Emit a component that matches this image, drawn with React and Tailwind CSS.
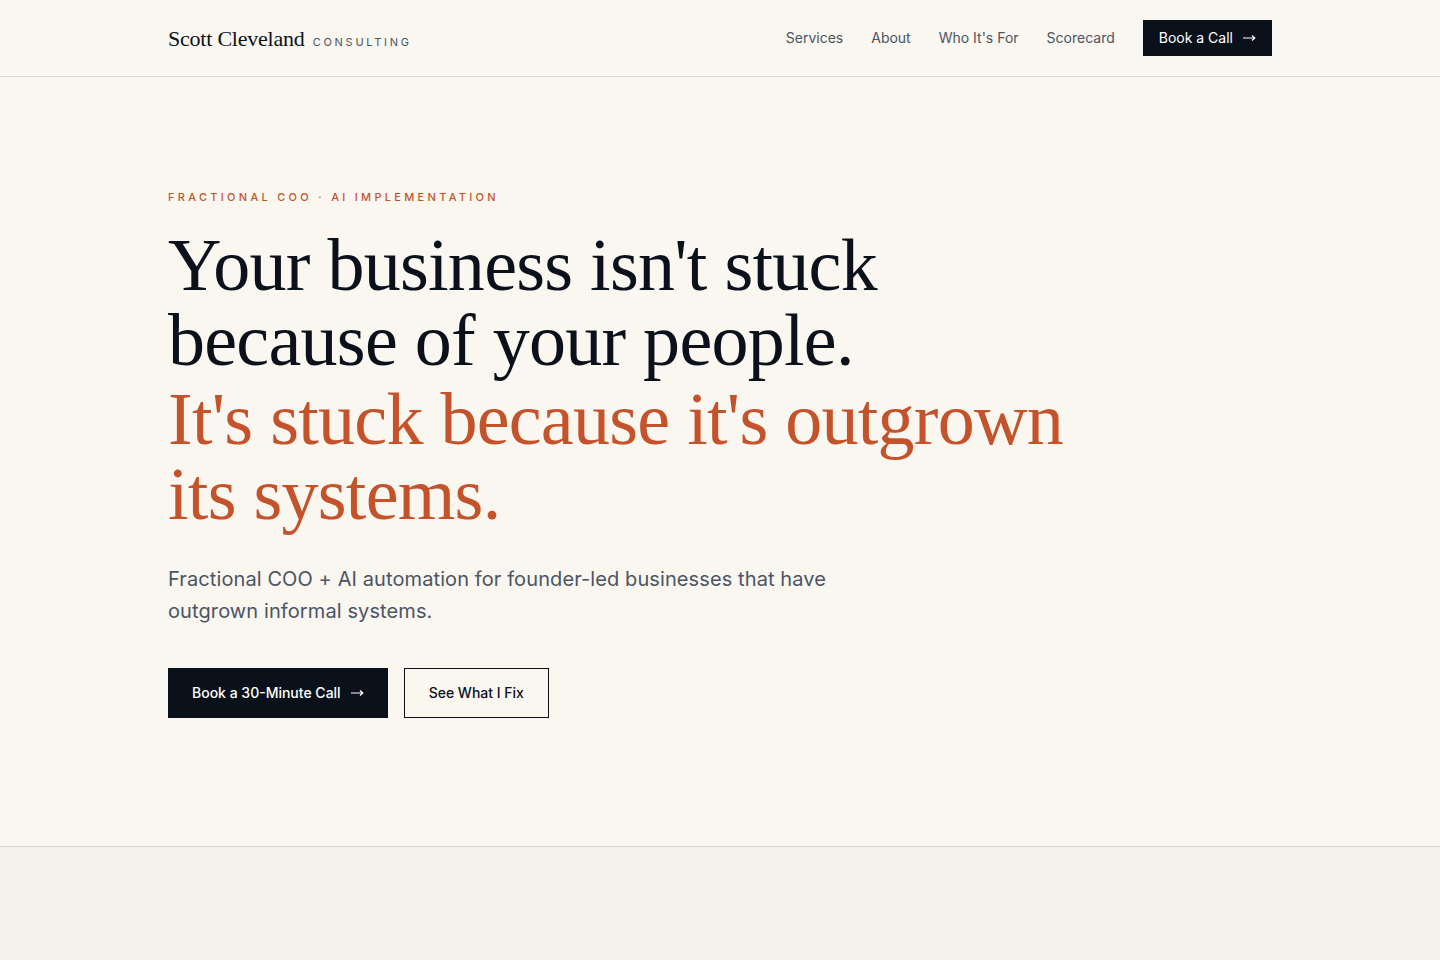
import { ArrowRight } from 'lucide-react'

const navLinks = ['Services', 'About', "Who It's For", 'Scorecard']

const sans = { fontFamily: 'Inter, "Noto Sans", sans-serif' }
const serif = { fontFamily: '"Liberation Serif", "DejaVu Serif", serif' }

function Arrow() {
  return (
    <svg width="13" height="8" viewBox="0 0 13 8" fill="none" stroke="currentColor" strokeWidth="1.2">
      <path d="M0 4h11.5M9 1.5 11.8 4 9 6.5" />
    </svg>
  )
}

export default function App() {
  return (
    <div className="min-h-screen bg-[#faf6f0] text-[#0b111b]" style={sans}>
      <header className="border-b border-[#dcd7cf]">
        <div className="mx-auto flex h-[76px] max-w-6xl items-center justify-between px-6">
          <a className="flex items-baseline gap-2">
            <span className="text-[22px] tracking-[-0.01em] text-[#0b111b]" style={serif}>
              Scott Cleveland
            </span>
            <span className="text-[11px] tracking-[0.25em] text-[#4b5563]">CONSULTING</span>
          </a>
          <nav className="flex items-center gap-7 text-sm text-[#4b5563]">
            {navLinks.map((l) => (
              <a key={l}>{l}</a>
            ))}
            <a className="flex h-9 items-center gap-2.5 bg-[#0b111b] px-4 text-white">
              Book a Call <Arrow />
            </a>
          </nav>
        </div>
      </header>

      <section className="border-b border-[#d6d1c9]">
        <div className="mx-auto max-w-6xl px-6 pb-[128px] pt-[112px]">
          <p className="text-[11px] font-medium tracking-[0.3em] text-[#c4532b]">
            FRACTIONAL COO · AI IMPLEMENTATION
          </p>
          <h1
            className="mt-[22px] max-w-[960px] text-[74px] leading-[75px] tracking-[-0.01em] text-[#0b111b]"
            style={serif}
          >
            Your business isn't stuck
            <br />
            because of your people.
            <span className="mt-1 block text-[#c4532b]">
              It's stuck because it's outgrown
              <br />
              its systems.
            </span>
          </h1>
          <p className="mt-[31px] max-w-[680px] text-xl leading-8 tracking-[0.005em] text-[#4b5563]">
            Fractional COO + AI automation for founder-led businesses that have outgrown informal systems.
          </p>
          <div className="mt-[41px] flex gap-4">
            <a className="flex h-[50px] items-center gap-2.5 bg-[#0b111b] px-6 text-sm font-medium text-white">
              Book a 30-Minute Call <Arrow />
            </a>
            <a className="flex h-[50px] items-center border border-[#0b111b] px-6 text-sm font-medium text-[#0b111b]">
              See What I Fix
            </a>
          </div>
        </div>
      </section>

      <section className="h-[200px] bg-[#f4f0ea]" />
    </div>
  )
}
